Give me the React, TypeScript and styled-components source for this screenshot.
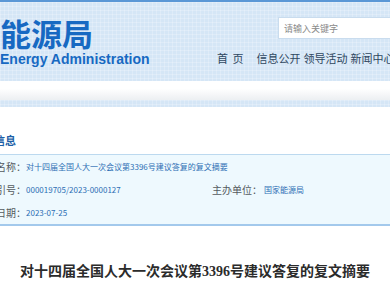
import React from "react";
import styled, { createGlobalStyle } from "styled-components";

const Global = createGlobalStyle`
  html, body { margin: 0; padding: 0; background: #ffffff; }
  body { width: 390px; height: 291px; overflow: hidden; font-family: "Noto Sans CJK SC", "Liberation Sans", sans-serif; }
  #root { width: 390px; overflow: hidden; }
`;

const gridBg = `
  background-color: #d5e6f6;
  background-image:
    linear-gradient(rgba(255,255,255,0.22) 1px, transparent 1px),
    linear-gradient(90deg, rgba(255,255,255,0.22) 1px, transparent 1px);
  background-size: 4px 4px;
`;

const Page = styled.div`
  width: 390px;
  display: flex;
  flex-direction: column;
`;

const Header = styled.header`
  ${gridBg}
  height: 79px;
  border-top: 2px solid #5a97d6;
  display: flex;
  overflow: hidden;
`;

const Logo = styled.div`
  width: 217px;
  flex-shrink: 0;
  display: flex;
  flex-direction: column;
  padding-top: 13px;
`;

const LogoCn = styled.div`
  font-family: "Noto Sans CJK SC", sans-serif;
  font-weight: 700;
  font-size: 31px;
  line-height: 36px;
  color: #1769c2;
`;

const LogoEn = styled.div`
  font-family: "Liberation Sans", Arial, sans-serif;
  font-weight: 700;
  font-size: 14px;
  line-height: 16px;
  color: #1769c2;
  white-space: nowrap;
`;

const RightCol = styled.div`
  display: flex;
  flex-direction: column;
  align-items: flex-start;
  padding-top: 15px;
  flex-shrink: 0;
`;

const Search = styled.div`
  margin-left: 61px;
  width: 140px;
  height: 22px;
  background: #ffffff;
  border: 1px solid #c9dcee;
  box-sizing: border-box;
  display: flex;
  align-items: center;
  padding-left: 5px;
  font-size: 9px;
  color: #8a8a8a;
  white-space: nowrap;
`;

const Nav = styled.nav`
  display: flex;
  margin-top: 12px;
  white-space: nowrap;
`;

const NavItem = styled.span<{ $first?: boolean }>`
  font-size: 11px;
  line-height: 14px;
  color: #2f475f;
  margin-right: ${(p) => (p.$first ? "12px" : "3px")};
  letter-spacing: ${(p) => (p.$first ? "1px" : "0")};
`;

const SubBar = styled.div`
  height: 19px;
  background: linear-gradient(#ffffff, #ffffff 40%, #eceff2);
`;

const Band = styled.div`
  ${gridBg}
  height: 7px;
`;

const SectionHead = styled.div`
  height: 47px;
  display: flex;
  align-items: flex-end;
  padding-bottom: 7px;
  box-sizing: border-box;
`;

const SectionTitle = styled.div`
  margin-left: -28px;
  font-size: 11px;
  line-height: 14px;
  font-weight: 700;
  color: #1d5fa7;
  white-space: nowrap;
`;

const InfoBox = styled.div`
  background: #eef9fe;
  border-top: 1px solid #bcd9ef;
  border-bottom: 2px solid #a3c9ec;
  display: grid;
  grid-template-columns: 26px 186px 52px 1fr;
  grid-auto-rows: 23px;
`;

const Label = styled.div`
  display: flex;
  justify-content: flex-end;
  font-size: 10px;
  line-height: 23px;
  color: #555b60;
  white-space: nowrap;
`;

const Label2 = styled.div`
  font-size: 10px;
  line-height: 23px;
  color: #555b60;
  white-space: nowrap;
`;

const Value = styled.div<{ $span?: number }>`
  font-size: 8px;
  line-height: 23px;
  color: #2c6eb4;
  white-space: nowrap;
  grid-column: span ${(p) => p.$span ?? 1};
`;

const Title = styled.h1`
  margin: 0;
  padding-top: 36px;
  text-align: center;
  font-family: "Liberation Serif", "Noto Sans CJK SC", serif;
  font-weight: 700;
  font-size: 14px;
  line-height: 20px;
  color: #2b2b2b;
  white-space: nowrap;
`;

export default function App() {
  return (
    <>
      <Global />
      <Page>
        <Header>
          <Logo>
            <LogoCn>能源局</LogoCn>
            <LogoEn>Energy Administration</LogoEn>
          </Logo>
          <RightCol>
            <Search>请输入关键字</Search>
            <Nav>
              <NavItem $first>首 页</NavItem>
              <NavItem>信息公开</NavItem>
              <NavItem>领导活动</NavItem>
              <NavItem>新闻中心</NavItem>
            </Nav>
          </RightCol>
        </Header>
        <SubBar />
        <Band />
        <SectionHead>
          <SectionTitle>基本信息</SectionTitle>
        </SectionHead>
        <InfoBox>
          <Label><span>名称：</span></Label>
          <Value $span={3}>对十四届全国人大一次会议第3396号建议答复的复文摘要</Value>
          <Label><span>索引号：</span></Label>
          <Value>000019705/2023-0000127</Value>
          <Label2>主办单位：</Label2>
          <Value>国家能源局</Value>
          <Label><span>发布日期：</span></Label>
          <Value $span={3}>2023-07-25</Value>
        </InfoBox>
        <Title>对十四届全国人大一次会议第3396号建议答复的复文摘要</Title>
      </Page>
    </>
  );
}
